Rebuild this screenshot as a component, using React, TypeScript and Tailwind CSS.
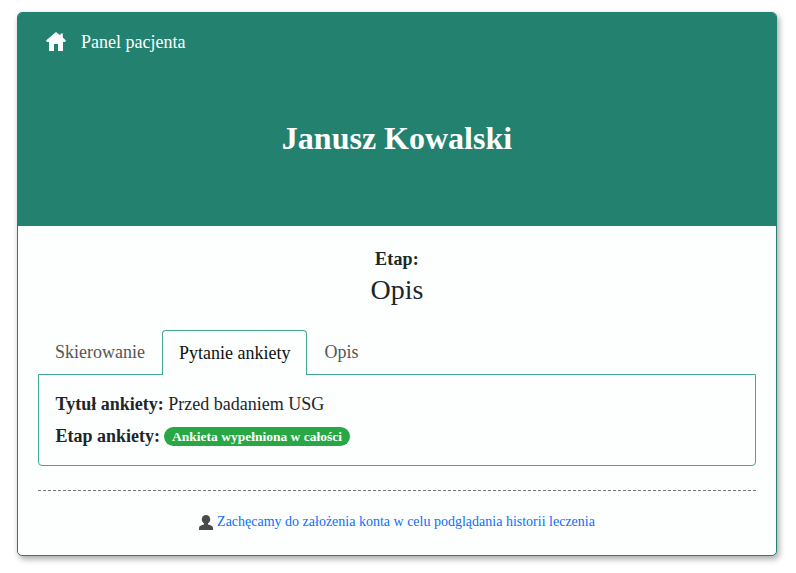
function HomeIcon() {
  return (
    <svg viewBox="0 0 20 19" className="w-5 h-[19px]" fill="currentColor">
      <path d="M10 0 L14.5 3.6 V1.5 H16.8 V5.5 L20 8.6 L19 10 H17 V19 H12 V12 H8 V19 H3 V10 H1 L0 8.6 Z" />
    </svg>
  );
}

function UserIcon() {
  return (
    <svg viewBox="0 0 14 15" className="w-[14px] h-[15px] mr-1 text-[#4a4a4a]" fill="currentColor">
      <ellipse cx="7" cy="4.4" rx="4.2" ry="4.4" />
      <path d="M5 8 H9 V9.6 C11.5 10.2 14 11 14 13 V15 H0 V13 C0 11 2.5 10.2 5 9.6 Z" />
    </svg>
  );
}

export default function App() {
  return (
    <div className="min-h-[573px] bg-white pt-3 px-[17px] font-['Liberation_Serif',serif] text-[#212529]">
      <div className="w-[760px] h-[544px] rounded-[5px] border border-[#22806e] bg-[#fcfffe] shadow-[2px_3px_6px_rgba(0,0,0,0.35)] overflow-hidden">
        <div className="h-[213px] bg-[#23816f] text-white">
          <div className="flex items-center pl-[28px] pt-[16px] h-[41px]">
            <HomeIcon />
            <span className="ml-[15px] text-[18px] leading-[26px]">Panel pacjenta</span>
          </div>
          <h1 className="mt-[64px] text-center text-[32px] font-bold leading-[40px]">Janusz Kowalski</h1>
        </div>

        <div className="px-5">
          <div className="mt-[21px] text-center text-[18px] font-bold leading-[24px] tracking-[0.2px]">Etap:</div>
          <div className="mt-[1px] text-center text-[28px] leading-[36px]">Opis</div>

          <div className="mt-[22px] flex pl-[1px] relative z-10">
            <div className="pl-4 pr-[17px] h-[44px] flex items-center text-[18px] text-[#555]">Skierowanie</div>
            <div className="px-4 h-[45px] flex items-center text-[18px] text-[#111] bg-[#fcfffe] border border-[#3fa88f] border-b-0 rounded-t-[4px]">Pytanie ankiety</div>
            <div className="pl-[17px] pr-4 h-[44px] flex items-center text-[18px] text-[#555]">Opis</div>
          </div>

          <div className="-mt-[1px] h-[92px] rounded-b-[4px] border border-[#3fa88f] px-[16.5px] pt-[17px]">
            <div className="text-[18px] leading-[24px]"><b>Tytuł ankiety:</b> Przed badaniem USG</div>
            <div className="mt-2 flex items-center text-[18px] leading-[24px]">
              <b>Etap ankiety:</b>
              <span className="ml-[3.5px] rounded-full bg-[#28a745] px-[8.5px] text-[13.5px] leading-[19px] font-bold text-white">Ankieta wypełniona w całości</span>
            </div>
          </div>

          <div className="mt-6 border-t border-dashed border-[#777]" />
          <div className="mt-[21px] flex items-center justify-center text-[14px] leading-[20px]">
            <UserIcon />
            <span className="text-[#0d6efd]">Zachęcamy do założenia konta w celu podglądania historii leczenia</span>
          </div>
        </div>
      </div>
    </div>
  );
}
